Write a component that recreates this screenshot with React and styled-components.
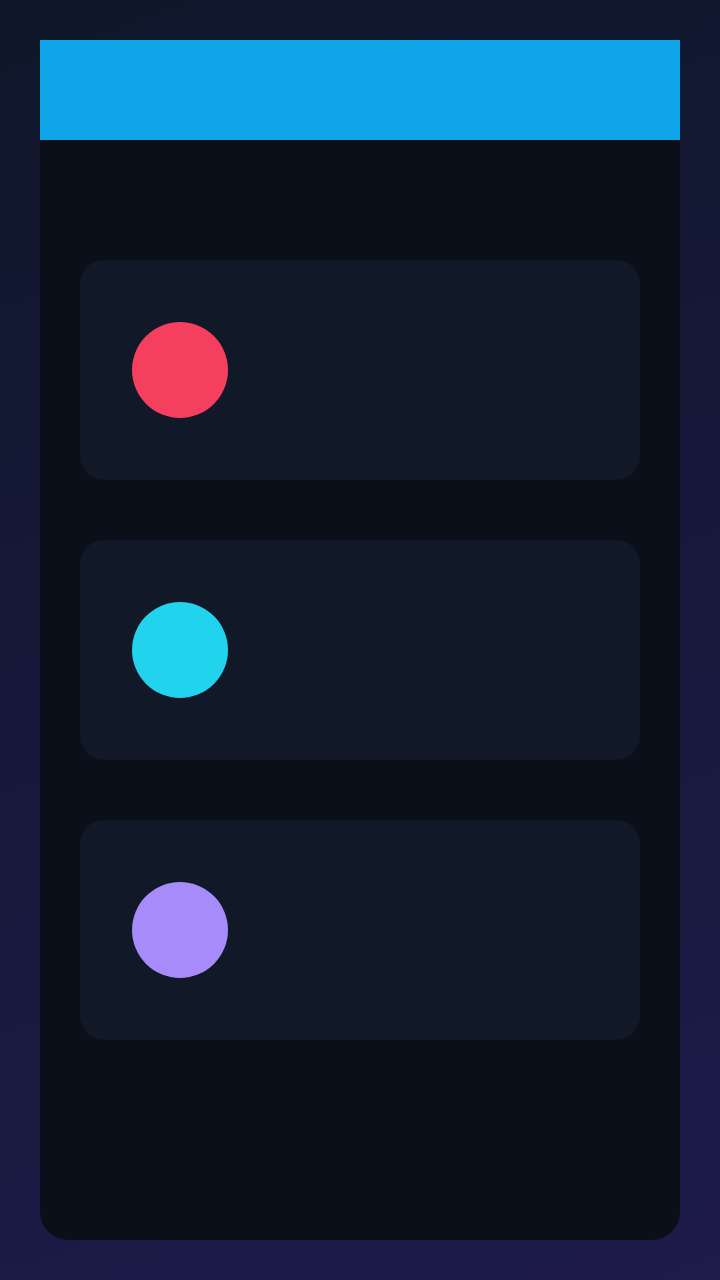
import styled, { createGlobalStyle } from "styled-components";

const GlobalStyle = createGlobalStyle`
  html, body {
    margin: 0;
    padding: 0;
  }
  body {
    font-family: "Inter", "Liberation Sans", sans-serif;
    background: #0f172a;
  }
`;

const items = [
  { id: 1, color: "#f43f5e" },
  { id: 2, color: "#22d3ee" },
  { id: 3, color: "#a78bfa" },
];

export default function App() {
  return (
    <>
      <GlobalStyle />
      <Page>
        <Panel>
          <Header />
          <List>
            {items.map((item) => (
              <Card key={item.id}>
                <Dot $color={item.color} />
              </Card>
            ))}
          </List>
        </Panel>
      </Page>
    </>
  );
}

const Page = styled.div`
  box-sizing: border-box;
  width: 720px;
  height: 1280px;
  padding: 40px;
  background: linear-gradient(160deg, #0f172a 0%, #1e1b4b 100%);
  display: flex;
`;

const Panel = styled.div`
  flex: 1;
  display: flex;
  flex-direction: column;
  background: #0b0f19;
  border-radius: 0 0 28px 28px;
  overflow: hidden;
`;

const Header = styled.div`
  height: 100px;
  background: #0ea5e9;
  flex-shrink: 0;
`;

const List = styled.div`
  display: flex;
  flex-direction: column;
  gap: 60px;
  padding: 120px 40px 0;
`;

const Card = styled.div`
  height: 220px;
  border-radius: 24px;
  background: #111827;
  display: flex;
  align-items: center;
  padding-left: 52px;
`;

const Dot = styled.div`
  width: 96px;
  height: 96px;
  border-radius: 50%;
  background: ${(p) => p.$color};
`;
